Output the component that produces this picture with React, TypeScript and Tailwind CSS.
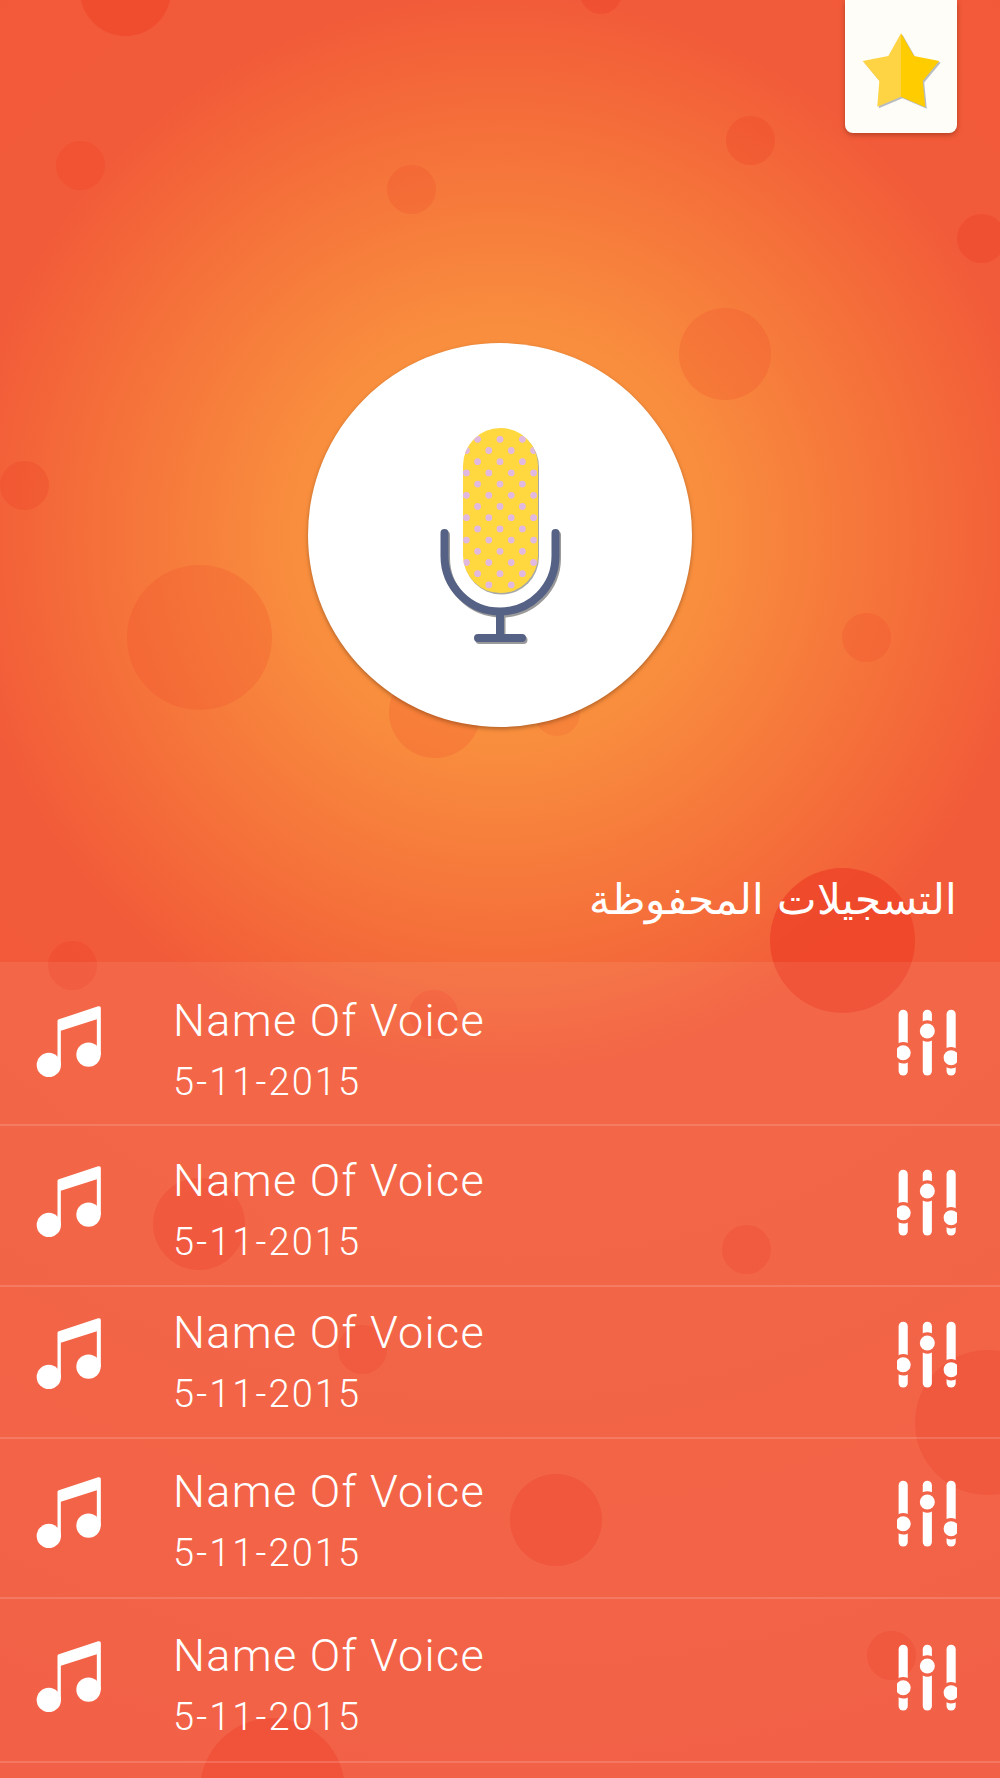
import React from "react";

const bubbles = [
  "left-[80px] top-[-55px] w-[91px] h-[91px] bg-[#ee4127]/55",
  "left-[580px] top-[-28px] w-[42px] h-[42px] bg-[#ee4127]/40",
  "left-[56px] top-[141px] w-[49px] h-[49px] bg-[#ee4127]/30",
  "left-[387px] top-[165px] w-[49px] h-[49px] bg-[#ee4127]/20",
  "left-[726px] top-[116px] w-[49px] h-[49px] bg-[#ee4127]/30",
  "left-[957px] top-[214px] w-[49px] h-[49px] bg-[#ee4127]/40",
  "left-[679px] top-[308px] w-[92px] h-[92px] bg-[#ee4127]/20",
  "left-[0px] top-[461px] w-[49px] h-[49px] bg-[#ee4127]/30",
  "left-[127px] top-[565px] w-[145px] h-[145px] bg-[#ee4127]/20",
  "left-[842px] top-[613px] w-[49px] h-[49px] bg-[#ee4127]/20",
  "left-[389px] top-[666px] w-[92px] h-[92px] bg-[#ee4127]/20",
  "left-[534px] top-[690px] w-[46px] h-[46px] bg-[#ee4127]/15",
  "left-[48px] top-[941px] w-[49px] h-[49px] bg-[#ee4127]/35",
  "left-[770px] top-[868px] w-[145px] h-[145px] bg-[#ee4127]/75",
  "left-[409px] top-[990px] w-[49px] h-[49px] bg-[#ee4127]/25",
  "left-[153px] top-[1178px] w-[92px] h-[92px] bg-[#ee4127]/50",
  "left-[722px] top-[1225px] w-[49px] h-[49px] bg-[#ee4127]/40",
  "left-[338px] top-[1325px] w-[49px] h-[49px] bg-[#ee4127]/40",
  "left-[915px] top-[1350px] w-[145px] h-[145px] bg-[#ee4127]/50",
  "left-[510px] top-[1474px] w-[92px] h-[92px] bg-[#ee4127]/60",
  "left-[867px] top-[1631px] w-[49px] h-[49px] bg-[#ee4127]/50",
  "left-[200px] top-[1718px] w-[145px] h-[145px] bg-[#ee4127]/75",
];

const rows = [
  "h-[164px] pt-[44px]",
  "h-[161px] pt-[40px]",
  "h-[152px] pt-[31px]",
  "h-[160px] pt-[38px]",
  "h-[164px] pt-[42px]",
];

function Mic() {
  const dots: [number, number][] = [];
  for (let i = 0; i < 14; i++) {
    for (let k = -3; k <= 3; k++) {
      if ((k + i) % 2 === 0) dots.push([500 + 11.2 * k, 439.3 + 11.2 * i]);
    }
  }
  const stand = (
    <>
      <path d="M444.5 533V556A55.5 55.5 0 0 0 555.5 556V533" fill="none" strokeWidth="8" strokeLinecap="round" />
      <path d="M500 612V638M478 638H522" fill="none" strokeWidth="8" strokeLinecap="round" />
    </>
  );
  return (
    <svg width="140" height="230" viewBox="430 420 140 230">
      <defs>
        <clipPath id="capsule">
          <rect x="463" y="428" width="75" height="165" rx="37.5" />
        </clipPath>
      </defs>
      <g stroke="#9a9a9a" transform="translate(1.5 2)">{stand}</g>
      <rect x="464" y="429.5" width="75" height="165" rx="37.5" fill="#a8a8a8" />
      <g stroke="#566285">{stand}</g>
      <rect x="463" y="428" width="75" height="165" rx="37.5" fill="#ffd83f" />
      <g clipPath="url(#capsule)">
        {dots.map(([x, y], n) => (
          <circle key={n} cx={x} cy={y} r="3.4" fill="#e0b8e0" />
        ))}
      </g>
    </svg>
  );
}

function Star() {
  const pts = "901,33.3 914,56 939.3,61 922.7,81 925.3,107.3 901,96.7 877.3,106.7 879.3,81 862.7,61 888.3,56";
  return (
    <svg width="80" height="78" viewBox="861 32 80 78">
      <polygon points={pts} fill="#b9bcc0" transform="translate(1.5 1.5)" />
      <polygon points="901,33.3 914,56 939.3,61 922.7,81 925.3,107.3 901,96.7" fill="#ffcc00" />
      <polygon points="901,33.3 888.3,56 862.7,61 879.3,81 877.3,106.7 901,96.7" fill="#ffd444" />
    </svg>
  );
}

function Music() {
  return (
    <svg width="65" height="71" viewBox="108 167 194 213" className="shrink-0" fill="white">
      <circle cx="146" cy="344" r="36.5" />
      <circle cx="265" cy="313" r="36.5" />
      <path d="M172 345V212Q172 208 176 207L294 168Q302 166 302 173V315H290V207L182 241V345Z" />
    </svg>
  );
}

function Mixer({ id }: { id: number }) {
  return (
    <svg width="60" height="68" viewBox="108 88 184 204" fill="white">
      <defs>
        <mask id={`gap${id}`} maskUnits="userSpaceOnUse" x="100" y="80" width="200" height="220">
          <rect x="100" y="80" width="200" height="220" fill="white" />
          <circle cx="127" cy="220" r="33" fill="black" />
          <circle cx="201" cy="153" r="33" fill="black" />
          <circle cx="274" cy="235" r="33" fill="black" />
        </mask>
      </defs>
      <g mask={`url(#gap${id})`}>
        <rect x="113" y="88" width="28" height="202" rx="14" />
        <rect x="187" y="88" width="28" height="202" rx="14" />
        <rect x="260" y="88" width="28" height="202" rx="14" />
      </g>
      <circle cx="127" cy="220" r="23" />
      <circle cx="201" cy="153" r="23" />
      <circle cx="274" cy="235" r="23" />
    </svg>
  );
}

export default function App() {
  return (
    <div className="relative w-[1000px] h-[1778px] overflow-hidden bg-[radial-gradient(circle_at_500px_535px,#fa9a41_0,#f98f3e_200px,#f5703a_405px,#f25b39_540px,#f15539_1300px)] font-['Roboto',sans-serif] text-white">
      {bubbles.map((b) => (
        <div key={b} className={`absolute rounded-full ${b}`} />
      ))}
      <div className="relative flex flex-col h-full">
        <div className="flex flex-col h-[962px]">
          <div className="self-end mr-[43px] flex justify-center items-start pt-[32px] w-[112px] h-[133px] rounded-b-lg bg-[#fffdf8] shadow-[0_2px_5px_rgba(120,40,20,0.5)]">
            <Star />
          </div>
          <div className="self-center mt-[210px] flex items-center justify-center w-[384px] h-[384px] rounded-full bg-white shadow-[0_2px_4px_rgba(120,60,20,0.55)]">
            <Mic />
          </div>
          <div dir="rtl" className="self-end mr-[43px] mt-[143px] font-['DejaVu_Sans',sans-serif] text-[42px] leading-[60px] font-light whitespace-nowrap">
            التسجيلات المحفوظة
          </div>
        </div>
        <div className="flex-1 flex flex-col bg-white/[0.07]">
          {rows.map((r, i) => (
            <div key={r} className={`flex items-start justify-between pl-[36px] pr-[43px] box-border border-b-2 border-white/15 ${r}`}>
              <div className="flex items-start">
                <Music />
                <div className="ml-[72px] mt-[-10px] flex flex-col">
                  <div className="text-[45px] leading-[50px] font-light tracking-[1.3px]">Name Of Voice</div>
                  <div className="text-[38px] leading-[44px] font-light tracking-[2.1px] mt-[14px]">5-11-2015</div>
                </div>
              </div>
              <div className="mt-[3px]">
                <Mixer id={i} />
              </div>
            </div>
          ))}
        </div>
      </div>
    </div>
  );
}
